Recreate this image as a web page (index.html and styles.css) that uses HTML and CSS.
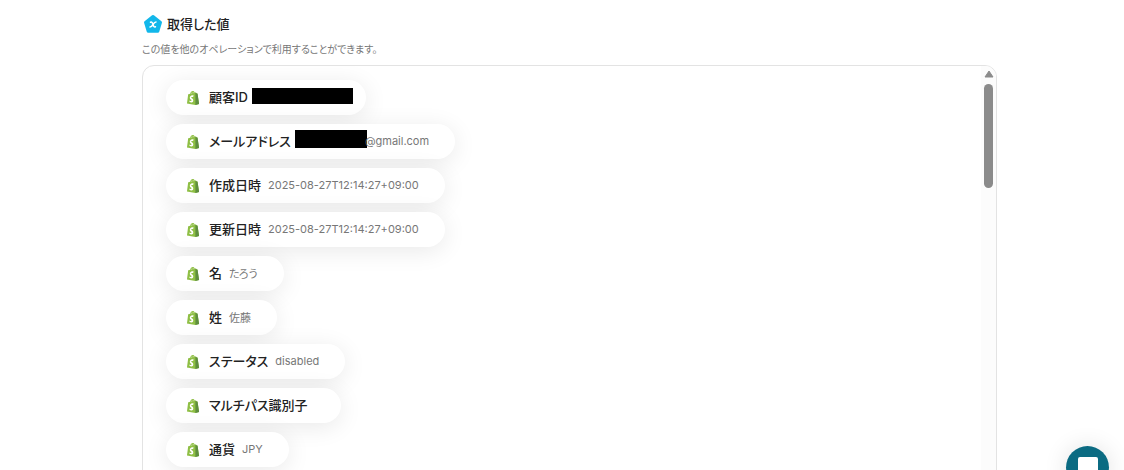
FILE: index.html
```html
<!DOCTYPE html>
<html lang="ja">
<head>
  <meta charset="UTF-8" />
  <meta name="viewport" content="width=device-width, initial-scale=1.0" />
  <title>取得した値</title>
  <link rel="stylesheet" href="styles.css">
</head>
<body>
  <!-- Shared icon -->
  <svg class="sprite" aria-hidden="true">
    <symbol id="bag" viewBox="0 0 110 125">
      <path fill="#8fbf45" d="M12 30l18-6C33 10 42 1 53 1c9 0 15 5 18 14l8-1 16 9 14 92-33 9L1 111z"/>
      <path fill="#dcebc4" d="M65 17l-6 2c0-5-.7-8-2-10 4 .6 6 3 8 8zM48 11c1.500 3 2.200 6 2.200 10L38 25C40 18 43 13 48 11z"/>
      <path fill="#5e8e3e" d="M76.400 14.300l9.100 8.400 10.300 1.200 13.700 92-33.100 8.200z"/>
      <path fill="#fff" d="M60 39.900l-3.800 14.400s-4.300-2-9.400-1.600c-7.500.5-7.500 5.200-7.500 6.400.4 6.400 17.300 7.800 18.300 22.900.7 11.900-6.300 20-16.400 20.600-12.200.8-18.900-6.400-18.900-6.400l2.600-11s6.700 5.100 12.100 4.700c3.500-.2 4.800-3.100 4.700-5.100-.5-8.400-14.300-7.900-15.200-21.700-.7-11.600 6.900-23 24-24.100 6.300-.4 9.500.9 9.500.9z"/>
    </symbol>
  </svg>

  <main class="page">
    <!-- Heading -->
    <h1 class="heading">
      <svg class="heading-icon" viewBox="0 0 20 20" aria-hidden="true">
        <path fill="#12b7ea" stroke="#12b7ea" stroke-width="3" stroke-linejoin="round" d="M10 2.500L17.500 8.400l-2.700 8.900H5.200L2.500 8.400z"/>
        <path fill="none" stroke="#fff" stroke-width="1.500" stroke-linecap="round" d="M7.500 8.200c1.400-.5 2 .4 2.500 2.300s1.100 2.800 2.500 2.300M13 8c-1.200 0-2 1-3 2.500S8.200 13 7 13"/>
      </svg>
      取得した値
    </h1>
    <p class="description">この値を他のオペレーションで利用することができます。</p>

    <!-- Values -->
    <section class="panel">
      <ul class="value-list">
        <li class="pill">
          <svg class="pill-icon"><use href="#bag"/></svg>
          <span class="label">顧客ID</span>
          <span class="value"><span class="mask mask-id"></span></span>
        </li>
        <li class="pill">
          <svg class="pill-icon"><use href="#bag"/></svg>
          <span class="label">メールアドレス</span>
          <span class="value"><span class="mask mask-mail"></span>@gmail.com</span>
        </li>
        <li class="pill">
          <svg class="pill-icon"><use href="#bag"/></svg>
          <span class="label">作成日時</span>
          <span class="value">2025-08-27T12:14:27+09:00</span>
        </li>
        <li class="pill">
          <svg class="pill-icon"><use href="#bag"/></svg>
          <span class="label">更新日時</span>
          <span class="value">2025-08-27T12:14:27+09:00</span>
        </li>
        <li class="pill">
          <svg class="pill-icon"><use href="#bag"/></svg>
          <span class="label">名</span>
          <span class="value">たろう</span>
        </li>
        <li class="pill">
          <svg class="pill-icon"><use href="#bag"/></svg>
          <span class="label">姓</span>
          <span class="value">佐藤</span>
        </li>
        <li class="pill">
          <svg class="pill-icon"><use href="#bag"/></svg>
          <span class="label">ステータス</span>
          <span class="value">disabled</span>
        </li>
        <li class="pill">
          <svg class="pill-icon"><use href="#bag"/></svg>
          <span class="label">マルチパス識別子</span>
          <span class="value"></span>
        </li>
        <li class="pill">
          <svg class="pill-icon"><use href="#bag"/></svg>
          <span class="label">通貨</span>
          <span class="value">JPY</span>
        </li>
      </ul>
      <div class="scrollbar" aria-hidden="true">
        <svg class="scroll-arrow" viewBox="0 0 10 8"><path fill="#8b8b8b" stroke="#8b8b8b" stroke-linejoin="round" d="M5 1l4 6H1z"/></svg>
        <div class="scroll-thumb"></div>
      </div>
    </section>
  </main>

  <!-- Chat launcher -->
  <button class="chat-button" type="button" aria-label="チャットを開く">
    <svg class="chat-icon" viewBox="0 0 20 22" aria-hidden="true"><path fill="#fff" d="M2 0h16a2 2 0 0 1 2 2v20l-4-3H2a2 2 0 0 1-2-2V2a2 2 0 0 1 2-2z"/></svg>
  </button>
</body>
</html>
```
FILE: styles.css
```css
/* Global Styles */
* {
  box-sizing: border-box;
}
body {
  margin: 0;
  height: 100vh;
  overflow: hidden;
  background: #fff;
  color: #222;
  font-family: Inter, "Noto Sans CJK JP", sans-serif;
  font-feature-settings: "palt";
}
.sprite {
  position: absolute;
  width: 0;
  height: 0;
}
.page {
  padding: 14px 127px 0 142px;
}
/* Heading */
.heading {
  display: flex;
  align-items: center;
  gap: 4px;
  margin: 0;
  padding-left: 1px;
  font-size: 13px;
  line-height: 19px;
  font-weight: 500;
}
.heading-icon {
  width: 20px;
  height: 20px;
}
.description {
  margin: 8px 0;
  font-size: 10px;
  line-height: 15px;
  color: #777;
}
/* Values */
.panel {
  display: flex;
  justify-content: space-between;
  border: 1px solid #e3e3e3;
  border-radius: 12px;
  overflow: hidden;
}
.value-list {
  display: flex;
  flex-direction: column;
  align-items: flex-start;
  gap: 9px;
  margin: 0;
  padding: 14px 23px 40px;
  list-style: none;
}
.pill {
  display: flex;
  align-items: center;
  height: 35px;
  padding: 0 26px 0 20px;
  border-radius: 18px;
  background: #fff;
  box-shadow: 0 4px 24px rgba(0, 0, 0, 0.09);
}
.pill-icon {
  width: 14px;
  height: 14px;
  margin-right: 9px;
}
.label {
  margin-right: 7px;
  padding-bottom: 2px;
  font-size: 13px;
  font-weight: 500;
}
.value {
  display: flex;
  align-items: center;
  padding-bottom: 2px;
  font-size: 11px;
  color: #777;
}
.mask {
  background: #000;
}
.mask-id {
  width: 101px;
  height: 16px;
  margin: 0 -13px 2px -3px;
}
.mask-mail {
  width: 72px;
  height: 18px;
  margin: 0 -2px 4px -3px;
}
/* Scrollbar */
.scrollbar {
  display: flex;
  flex-direction: column;
  align-items: center;
  gap: 6px;
  width: 15px;
  padding-top: 4px;
  background: #fcfcfc;
}
.scroll-arrow {
  width: 10px;
  height: 8px;
}
.scroll-thumb {
  width: 9px;
  height: 104px;
  border-radius: 5px;
  background: #8b8b8b;
}
/* Chat launcher */
.chat-button {
  position: fixed;
  right: 15px;
  bottom: -19px;
  display: flex;
  justify-content: center;
  width: 43px;
  height: 43px;
  padding: 11px 0 0;
  border: none;
  border-radius: 50%;
  background: #0b6b82;
  box-shadow: 0 1px 24px rgba(0, 0, 0, 0.12);
  cursor: pointer;
}
.chat-icon {
  width: 20px;
  height: 22px;
}
```
